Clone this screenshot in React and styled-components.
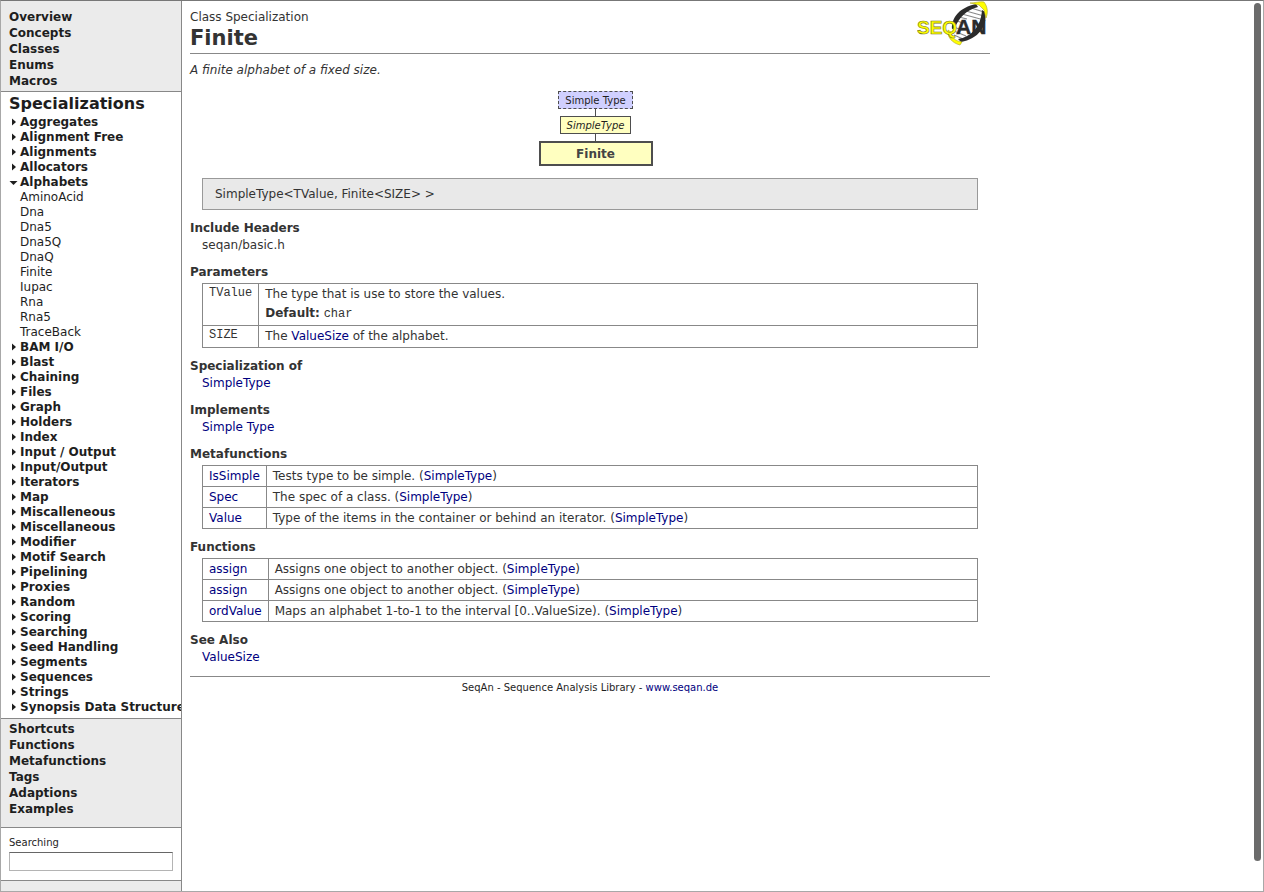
import React from "react";
import styled, { createGlobalStyle, css } from "styled-components";

const GlobalStyle = createGlobalStyle`
  *, *::before, *::after { box-sizing: border-box; }
  body {
    margin: 0;
    background: #fff;
    color: #333;
    font: 12px/16px Verdana, "DejaVu Sans", sans-serif;
  }
`;

const line = "#888";

const Frame = styled.div`
  display: flex;
  min-height: 100vh;
  border: 1px solid #a8a8a8;
  border-top-color: #777;
`;

const Sidebar = styled.aside`
  display: flex;
  flex-direction: column;
  flex: none;
  width: 181px;
  border-right: 1px solid ${line};
  background: #ebebeb;
  color: #1e1e1e;
  overflow: hidden;
`;

const NavList = styled.ul`
  list-style: none;
  margin: 0;
  padding: ${(p) => p.$pad};
`;

const NavLink = styled.a`
  display: block;
  color: inherit;
  font-weight: bold;
  text-decoration: none;
`;

const Tree = styled.nav`
  padding: 0 0 3px 8px;
  border: solid ${line};
  border-width: 1px 0;
  background: #fff;
`;

const TreeTitle = styled.h2`
  margin: 0;
  font-size: 16px;
  line-height: 23px;
`;

const TreeList = styled.ul`
  list-style: none;
  margin: 0;
  padding: 0;
  line-height: 15px;
  white-space: nowrap;
`;

const TreeLink = styled.a`
  display: flex;
  align-items: center;
  color: inherit;
  text-decoration: none;
  font-weight: ${(p) => (p.$leaf ? "normal" : "bold")};
`;

const Marker = styled.span`
  display: flex;
  flex: none;
  width: 11px;
`;

const Search = styled.form`
  display: flex;
  flex-direction: column;
  gap: 1px;
  padding: 7px 8px 9px;
  border: solid ${line};
  border-width: 1px 0;
  background: #fff;
`;

const SearchLabel = styled.label`
  font-size: 10px;
`;

const SearchInput = styled.input`
  width: 100%;
  height: 19px;
  margin: 0;
  padding: 0 4px;
  border: 1px solid #b4b4b4;
  border-top: 1px solid #666;
  background: #fff;
  font: inherit;
`;

const Main = styled.main`
  flex: 1;
  min-width: 0;
  padding: 8px;
`;

const Page = styled.div`
  max-width: 800px;
`;

const Header = styled.header`
  position: relative;
  padding-bottom: 2px;
  border-bottom: 1px solid ${line};
`;

const Title = styled.h1`
  margin: 0;
  font-size: 21px;
  line-height: 26px;
`;

const Logo = styled.svg`
  position: absolute;
  top: -8px;
  right: 0;
`;

const Summary = styled.p`
  margin: 8px 0 13px;
  font-style: italic;
`;

const Diagram = styled.div`
  display: flex;
  flex-direction: column;
  align-items: center;
  padding-left: 11px;
`;

const Node = styled.div`
  padding: 1px 6px 0;
  border: 1px solid #4e4e4e;
  background: #ffffc0;
  color: #1e1e1e;
  font-size: 10px;
  line-height: 15px;
  ${(p) =>
    p.$kind === "concept" &&
    css`
      border-style: dashed;
      background: #d0d0ff;
    `}
  ${(p) => p.$kind === "class" && "font-style: italic;"}
  ${(p) =>
    p.$kind === "current" &&
    css`
      width: 114px;
      border-width: 2px;
      color: #444;
      font-size: 12px;
      font-weight: bold;
      line-height: 20px;
      text-align: center;
    `}
`;

const Connector = styled.div`
  width: 1px;
  height: 7px;
  background: #4e4e4e;
`;

const Signature = styled.div`
  margin: 12px 12px 10px;
  padding: 7px 12px;
  border: 1px solid #999;
  background: #e9e9e9;
`;

const Section = styled.section`
  margin-bottom: 10px;
`;

const Heading = styled.h2`
  margin: 0;
  font-size: 12px;
  line-height: 16px;
`;

const Item = styled.div`
  padding-left: 12px;
  line-height: 18px;
`;

const TableBox = styled.div`
  margin: 3px 12px 0;
`;

const Table = styled.table`
  width: 100%;
  border-collapse: collapse;
`;

const Cell = styled.td`
  padding: 2px 6px;
  border: 1px solid ${line};
  vertical-align: top;
  ${(p) => p.$name && "width: 1px; white-space: nowrap;"}
`;

const CellLine = styled.div`
  padding-bottom: ${(p) => (p.$short ? 1 : 2)}px;
  & + & {
    padding-top: 1px;
  }
`;

const Code = styled.code`
  font: 12px/14px "Liberation Mono", monospace;
  ${(p) => p.$block && "display: block;"}
`;

const Link = styled.a`
  color: #000080;
  text-decoration: none;
`;

const Footer = styled.footer`
  padding-top: 3px;
  border-top: 1px solid ${line};
  color: #1e1e1e;
  font-size: 10px;
  text-align: center;
`;

const ScrollThumb = styled.div`
  position: fixed;
  top: 3px;
  right: 3px;
  bottom: 31px;
  width: 7px;
  border-radius: 4px;
  background: #6b6b6b;
`;

const topLinks = ["Overview", "Concepts", "Classes", "Enums", "Macros"];
const bottomLinks = ["Shortcuts", "Functions", "Metafunctions", "Tags", "Adaptions", "Examples"];
const leaves = ["AminoAcid", "Dna", "Dna5", "Dna5Q", "DnaQ", "Finite", "Iupac", "Rna", "Rna5", "TraceBack"];
const groups = [
  "Aggregates", "Alignment Free", "Alignments", "Allocators", "Alphabets", "BAM I/O", "Blast",
  "Chaining", "Files", "Graph", "Holders", "Index", "Input / Output", "Input/Output", "Iterators",
  "Map", "Miscalleneous", "Miscellaneous", "Modifier", "Motif Search", "Pipelining", "Proxies",
  "Random", "Scoring", "Searching", "Seed Handling", "Segments", "Sequences", "Strings",
  "Synopsis Data Structure",
];
const metafunctions = [
  ["IsSimple", "Tests type to be simple."],
  ["Spec", "The spec of a class."],
  ["Value", "Type of the items in the container or behind an iterator."],
];
const functions = [
  ["assign", "Assigns one object to another object."],
  ["assign", "Assigns one object to another object."],
  ["ordValue", "Maps an alphabet 1-to-1 to the interval [0..ValueSize)."],
];

function Arrow({ open }) {
  return (
    <svg width="9" height="9" viewBox="0 0 9 9" aria-hidden="true">
      <path d={open ? "M.5 3h8l-4 4z" : "M3 .5v7l4-3.500z"} fill="#1e1e1e" />
    </svg>
  );
}

function Nav({ links, pad }) {
  return (
    <NavList $pad={pad}>
      {links.map((text) => (
        <li key={text}><NavLink href="#">{text}</NavLink></li>
      ))}
    </NavList>
  );
}

function MemberTable({ rows }) {
  return (
    <TableBox>
      <Table>
        <tbody>
          {rows.map(([name, text], i) => (
            <tr key={i}>
              <Cell $name><Link href="#">{name}</Link></Cell>
              <Cell>{text} (<Link href="#">SimpleType</Link>)</Cell>
            </tr>
          ))}
        </tbody>
      </Table>
    </TableBox>
  );
}

function SeqanLogo() {
  return (
    <Logo width="73" height="47" viewBox="0 0 73 47" role="img" aria-label="SEQAN">
      <path d="M35 29C34 17 45 6 60 4L67 10C69 25 60 37 45 39Z" fill="#fff" />
      <g stroke="#8a8a8a" strokeWidth="1.200">
        <path d="M54 7l13 4M49 10l18 5M45 13l22 6M42 16l8 2M40 20l6 2M37 26l5 2M37 30l12 5M37 34l9 4" />
      </g>
      <path d="M35 28C34 17 43 6 59 3L61 6C50 9 42 16 38 27Z" fill="#2b2b2b" />
      <path d="M65 9L68 11C71 25 61 38 44 41L41 38C54 36 64 26 65 9Z" fill="#2b2b2b" />
      <path d="M53 2C58 2 63 0 67 1C71 6 71 12 69 17L67 9L62 4Z" fill="#ff0" stroke="#aaa02b" strokeWidth=".6" />
      <path d="M31 29L34 31C34 36 38 40 45 41L43 44C35 42 30 36 31 29Z" fill="#ff0" stroke="#aaa02b" strokeWidth=".6" />
      <g fontFamily='"Liberation Sans", Arial, sans-serif' fontWeight="bold">
        <text x="0" y="33" fontSize="19" fill="#ff0" stroke="#77771c" strokeWidth=".6">SEQ</text>
        <text x="39" y="33" fontSize="21" fill="#2b2b2b" stroke="#2b2b2b" strokeWidth=".4">AN</text>
      </g>
    </Logo>
  );
}

export default function App() {
  return (
    <>
      <GlobalStyle />
      <Frame>
        <Sidebar>
          <Nav links={topLinks} pad="8px 8px 2px" />
          <Tree>
            <TreeTitle>Specializations</TreeTitle>
            <TreeList>
              {groups.map((name) => (
                <li key={name}>
                  <TreeLink href="#">
                    <Marker><Arrow open={name === "Alphabets"} /></Marker>
                    {name}
                  </TreeLink>
                  {name === "Alphabets" && (
                    <TreeList>
                      {leaves.map((leaf) => (
                        <li key={leaf}><TreeLink $leaf href="#"><Marker />{leaf}</TreeLink></li>
                      ))}
                    </TreeList>
                  )}
                </li>
              ))}
            </TreeList>
          </Tree>
          <Nav links={bottomLinks} pad="2px 8px 10px" />
          <Search>
            <SearchLabel htmlFor="search">Searching</SearchLabel>
            <SearchInput id="search" type="text" />
          </Search>
        </Sidebar>
        <Main>
          <Page>
            <Header>
              <div>Class Specialization</div>
              <Title>Finite</Title>
              <SeqanLogo />
            </Header>
            <Summary>A finite alphabet of a fixed size.</Summary>
            <Diagram>
              <Node $kind="concept">Simple Type</Node>
              <Connector />
              <Node $kind="class">SimpleType</Node>
              <Connector />
              <Node $kind="current">Finite</Node>
            </Diagram>
            <Signature>{"SimpleType<TValue, Finite<SIZE> >"}</Signature>
            <Section>
              <Heading>Include Headers</Heading>
              <Item>seqan/basic.h</Item>
            </Section>
            <Section>
              <Heading>Parameters</Heading>
              <TableBox>
                <Table>
                  <tbody>
                    <tr>
                      <Cell $name><Code $block>TValue</Code></Cell>
                      <Cell>
                        <CellLine>The type that is use to store the values.</CellLine>
                        <CellLine><b>Default:</b> <Code>char</Code></CellLine>
                      </Cell>
                    </tr>
                    <tr>
                      <Cell $name><Code $block>SIZE</Code></Cell>
                      <Cell>
                        <CellLine $short>The <Link href="#">ValueSize</Link> of the alphabet.</CellLine>
                      </Cell>
                    </tr>
                  </tbody>
                </Table>
              </TableBox>
            </Section>
            <Section>
              <Heading>Specialization of</Heading>
              <Item><Link href="#">SimpleType</Link></Item>
            </Section>
            <Section>
              <Heading>Implements</Heading>
              <Item><Link href="#">Simple Type</Link></Item>
            </Section>
            <Section>
              <Heading>Metafunctions</Heading>
              <MemberTable rows={metafunctions} />
            </Section>
            <Section>
              <Heading>Functions</Heading>
              <MemberTable rows={functions} />
            </Section>
            <Section>
              <Heading>See Also</Heading>
              <Item><Link href="#">ValueSize</Link></Item>
            </Section>
            <Footer>
              SeqAn - Sequence Analysis Library - <Link href="#">www.seqan.de</Link>
            </Footer>
          </Page>
        </Main>
      </Frame>
      <ScrollThumb />
    </>
  );
}
